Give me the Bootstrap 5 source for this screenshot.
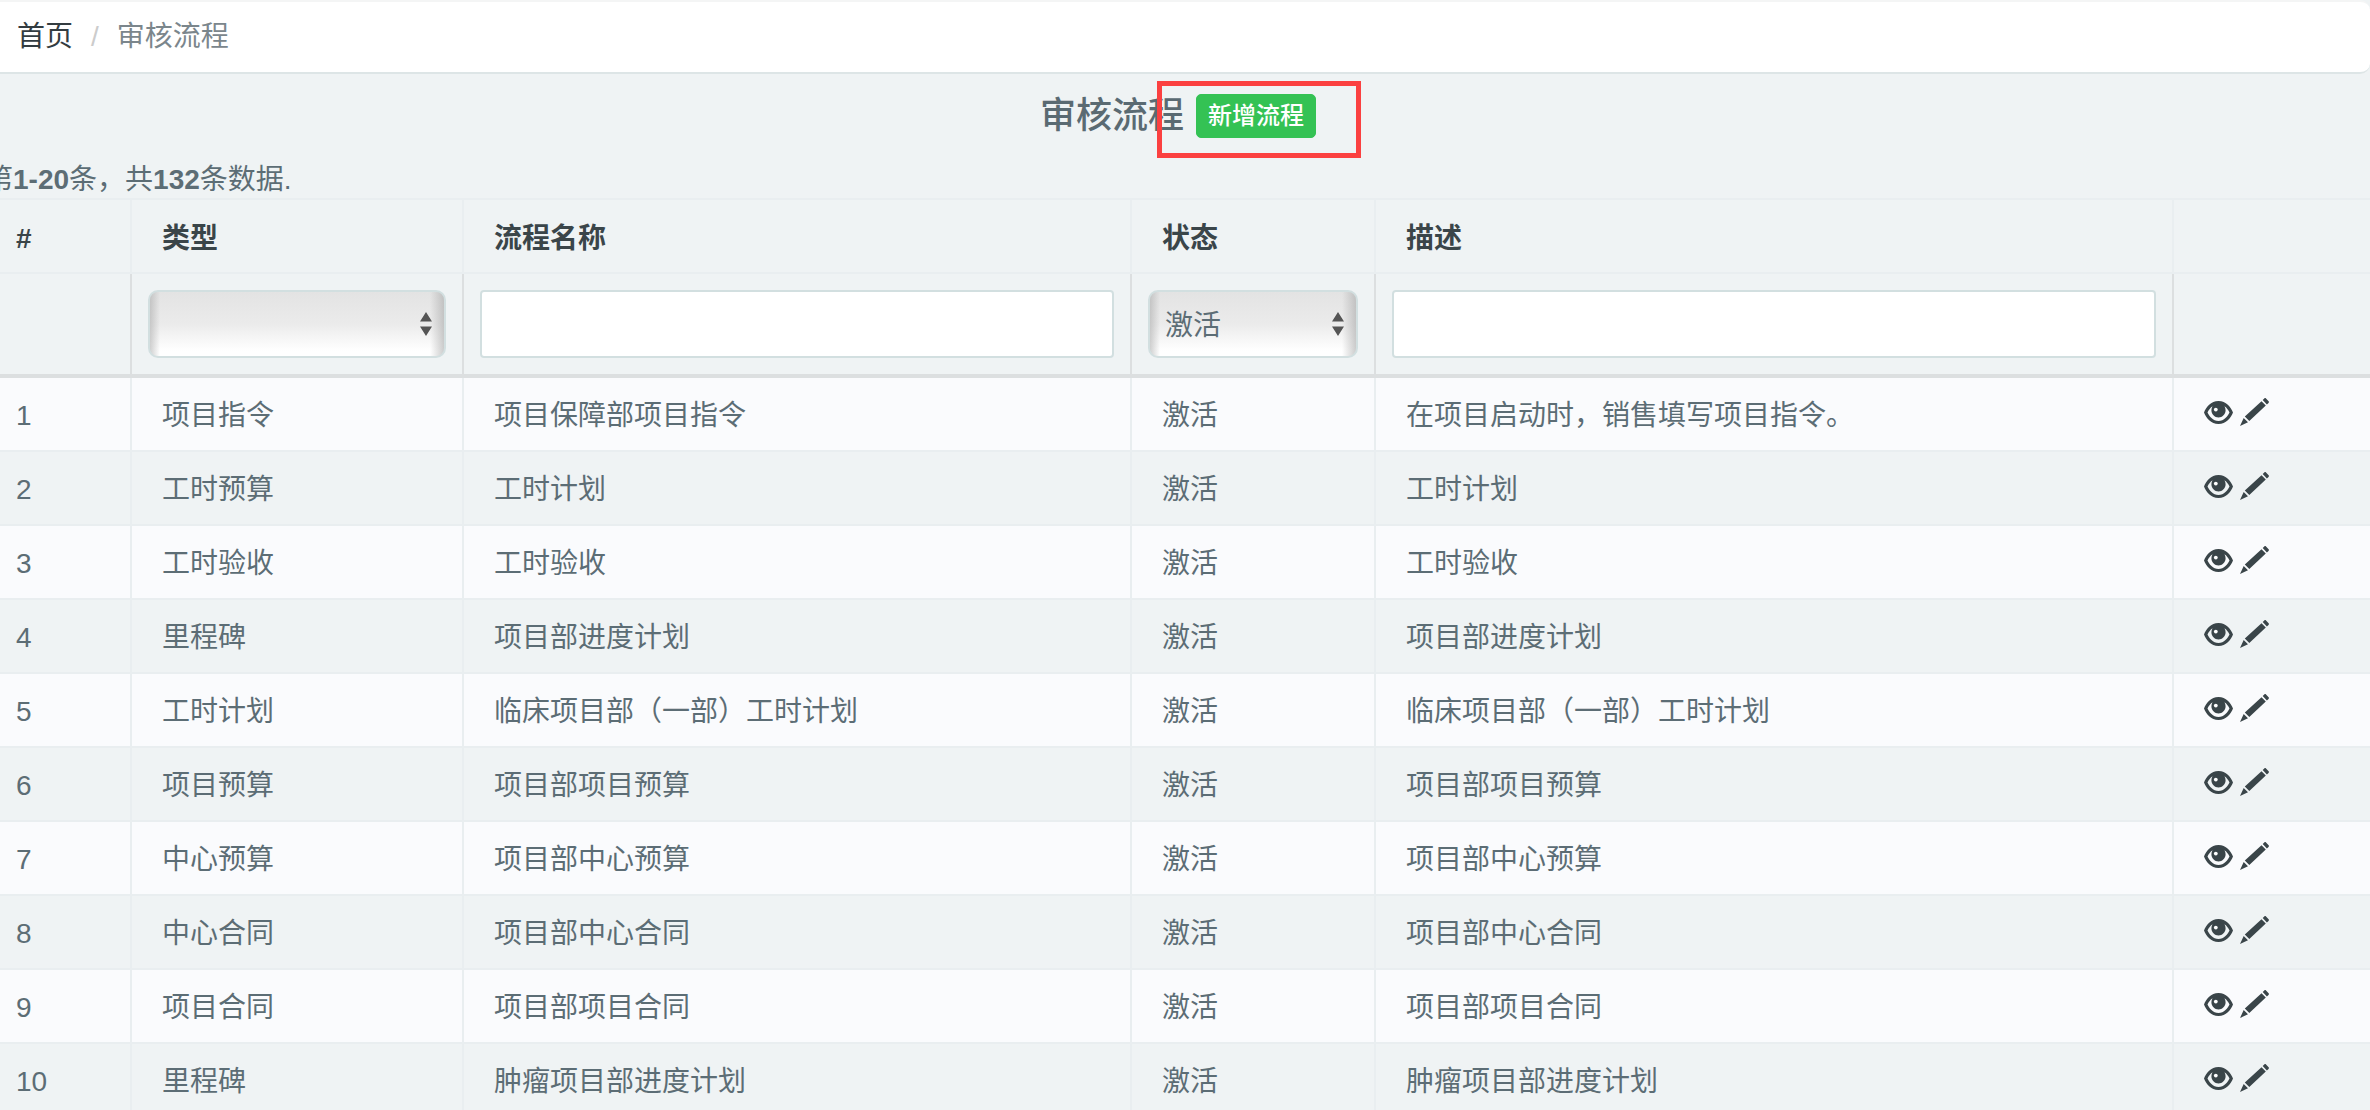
<!DOCTYPE html>
<html lang="zh-CN">
<head>
  <meta charset="UTF-8" />
  <meta name="viewport" content="width=device-width, initial-scale=1" />
  <title>审核流程</title>
  <link rel="stylesheet" href="https://cdn.jsdelivr.net/npm/bootstrap@5.3.3/dist/css/bootstrap.min.css" />
  <style>
    body {
      background: #eff3f4;
      color: #5c6d75;
      font-family: "Liberation Sans", "Noto Sans CJK SC", sans-serif;
      font-size: 28px;
    }

    .crumb-bar {
      background: #fff;
      height: 74px;
      border-top: 2px solid #f4f5f5;
      border-bottom: 2px solid #dde5e6;
      border-radius: 0 10px 10px 0;
      padding: 0 17px;
      display: flex;
      align-items: center;
    }

    .crumb-bar .breadcrumb {
      margin: 0;
      font-size: 28px;
      --bs-breadcrumb-item-padding-x: 18px;
      --bs-breadcrumb-divider-color: #ccc;
      --bs-breadcrumb-item-active-color: #7b868c;
    }

    .crumb-bar a {
      color: #333c41;
      text-decoration: none;
    }

    .page-wrap {
      margin-left: -15px;
      width: 2386px;
    }

    .title-row {
      height: 86px;
      padding-top: 20px;
      gap: 12px;
    }

    .title-row h2 {
      font-size: 36px;
      font-weight: 500;
      color: #5a6a72;
      margin: 0;
      line-height: 43px;
    }

    .add-btn {
      --bs-btn-bg: #34c254;
      --bs-btn-border-color: #34c254;
      --bs-btn-color: #fff;
      --bs-btn-hover-bg: #2db04b;
      --bs-btn-hover-border-color: #2db04b;
      --bs-btn-hover-color: #fff;
      --bs-btn-font-size: 24px;
      --bs-btn-font-weight: 500;
      --bs-btn-border-radius: 5px;
      --bs-btn-padding-x: 11px;
      --bs-btn-padding-y: 0;
      line-height: 42px;
    }

    .summary-line {
      height: 38px;
      line-height: 39px;
      margin: 0;
    }

    .flow-table {
      table-layout: fixed;
      width: 2386px;
      margin: 0;
      border-collapse: collapse;
      --bs-table-bg: transparent;
      --bs-table-color: #5c6d75;
      --bs-table-striped-bg: transparent;
      --bs-table-striped-color: #5c6d75;
    }

    .flow-table th,
    .flow-table td {
      border: 2px solid #e9eef0;
      padding: 3px 30px 0;
      height: 74px;
      vertical-align: middle;
      white-space: nowrap;
      box-shadow: none;
    }

    .flow-table tr > :first-child { border-left: 0; padding-left: 31px; }
    .flow-table tr > :last-child { border-right: 0; }

    .flow-table thead th {
      color: #3a4549;
      font-weight: 700;
      padding-top: 5px;
    }

    .flow-table .filter-row td {
      height: 103px;
      padding: 0 16px;
      border-left-color: #dcdfe0;
      border-right-color: #dcdfe0;
      border-bottom: 4px solid #dcdfe0;
    }

    .flow-table tbody tr:first-child td { height: 75px; }
    .flow-table tbody tr:nth-child(odd) td { background: #fafbfd; }

    .c-num { width: 146px; }
    .c-type { width: 332px; }
    .c-name { width: 668px; }
    .c-state { width: 244px; }
    .c-desc { width: 798px; }

    .filter-input,
    .filter-select {
      display: block;
      width: 100%;
      height: 68px;
      font-size: 28px;
      color: #5c6d75;
      border: 2px solid #d2dfe0;
      box-shadow: none;
    }

    .filter-input {
      background: #fff;
      border-radius: 4px;
    }

    .filter-select {
      appearance: none;
      border-radius: 10px;
      padding: 3px 0 0 15px;
      background-color: #eee;
      background-image:
        url("data:image/svg+xml,%3Csvg xmlns='http://www.w3.org/2000/svg' width='12' height='24'%3E%3Cpath fill='%23555' d='M6 0l6 9.500H0zM6 24L0 14.500h12z'/%3E%3C/svg%3E"),
        linear-gradient(to right, rgba(170,170,170,.55), rgba(255,255,255,0) 10px, rgba(255,255,255,0) calc(100% - 14px), rgba(170,170,170,.6)),
        linear-gradient(to bottom, #e3e3e3, #ebebeb 50%, #fff 92%);
      background-repeat: no-repeat;
      background-position: right 12px center, 0 0, 0 0;
    }

    .row-icons {
      display: flex;
      align-items: center;
      gap: 7px;
      margin-top: -7px;
    }

    .red-box {
      left: 1157px;
      top: 81px;
      width: 204px;
      height: 77px;
      border: 5px solid #fb4040;
    }
  </style>
</head>
<body class="vh-100 overflow-hidden">
  <svg class="d-none">
    <symbol id="ico-eye" viewBox="0 0 29 23">
      <path fill="#3a4549" fill-rule="evenodd" d="M14.500 0C22 0 27 6 29 11.500 27 17 22 23 14.500 23S2 17 0 11.500C2 6 7 0 14.500 0zM3.500 11.500c1.500 3.500 5.500 8.500 11 8.500s9.500-5 11-8.500c-1-2.300-2.700-4.700-5-6.300.7 1.200 1.100 2.600 1.100 4.100 0 4-3.200 7.200-7.100 7.200S7.400 13.300 7.400 9.300c0-1.500.4-2.900 1.100-4.100-2.300 1.600-4 4-5 6.300z"/>
      <path fill="#3a4549" d="M14.500 3.500c3.300 0 6 2.600 6 5.800s-2.700 5.800-6 5.800-6-2.600-6-5.800 2.700-5.800 6-5.800z"/>
      <circle cx="11.800" cy="8.600" r="1.900" fill="#fff"/>
    </symbol>
    <symbol id="ico-pencil" viewBox="0 0 29 28">
      <path fill="#3a4549" d="M24.300.4c.5-.5 1.200-.5 1.700 0l2.600 2.900c.5.500.4 1.200-.1 1.600L26.900 6.400 22.700 2zM21.500 3.200l4.300 4.300L9.300 23l-4.500-4.400zM3.700 20l4.300 4.200L0 28z"/>
    </symbol>
  </svg>

  <nav class="crumb-bar" aria-label="breadcrumb">
    <ol class="breadcrumb">
      <li class="breadcrumb-item"><a href="#">首页</a></li>
      <li class="breadcrumb-item active" aria-current="page">审核流程</li>
    </ol>
  </nav>

  <div class="page-wrap">
    <div class="title-row d-flex justify-content-center align-items-start">
      <h2>审核流程</h2>
      <a href="#" class="btn add-btn">新增流程</a>
    </div>
    <p class="summary-line">第<b>1-20</b>条，共<b>132</b>条数据.</p>

    <table class="table flow-table">
      <colgroup>
        <col class="c-num"><col class="c-type"><col class="c-name"><col class="c-state"><col class="c-desc"><col>
      </colgroup>
      <thead>
        <tr><th>#</th><th>类型</th><th>流程名称</th><th>状态</th><th>描述</th><th></th></tr>
        <tr class="filter-row">
          <td></td>
          <td><select class="filter-select"><option></option></select></td>
          <td><input class="filter-input" type="text"></td>
          <td><select class="filter-select"><option>激活</option></select></td>
          <td><input class="filter-input" type="text"></td>
          <td></td>
        </tr>
      </thead>
      <tbody id="flowRows"></tbody>
    </table>
  </div>

  <div class="position-absolute red-box"></div>

  <script src="https://cdn.jsdelivr.net/npm/bootstrap@5.3.3/dist/js/bootstrap.bundle.min.js"></script>
  <script>
    // rows shown in the first screen of the list
    const rows = [
      ["项目指令", "项目保障部项目指令", "在项目启动时，销售填写项目指令。"],
      ["工时预算", "工时计划", "工时计划"],
      ["工时验收", "工时验收", "工时验收"],
      ["里程碑", "项目部进度计划", "项目部进度计划"],
      ["工时计划", "临床项目部（一部）工时计划", "临床项目部（一部）工时计划"],
      ["项目预算", "项目部项目预算", "项目部项目预算"],
      ["中心预算", "项目部中心预算", "项目部中心预算"],
      ["中心合同", "项目部中心合同", "项目部中心合同"],
      ["项目合同", "项目部项目合同", "项目部项目合同"],
      ["里程碑", "肿瘤项目部进度计划", "肿瘤项目部进度计划"]
    ];

    const icons = '<div class="row-icons">' +
      '<svg width="29" height="23"><use href="#ico-eye"/></svg>' +
      '<svg width="29" height="28"><use href="#ico-pencil"/></svg></div>';

    document.getElementById("flowRows").innerHTML = rows.map((r, i) =>
      `<tr><td>${i + 1}</td><td>${r[0]}</td><td>${r[1]}</td><td>激活</td><td>${r[2]}</td><td>${icons}</td></tr>`
    ).join("");
  </script>
</body>
</html>
